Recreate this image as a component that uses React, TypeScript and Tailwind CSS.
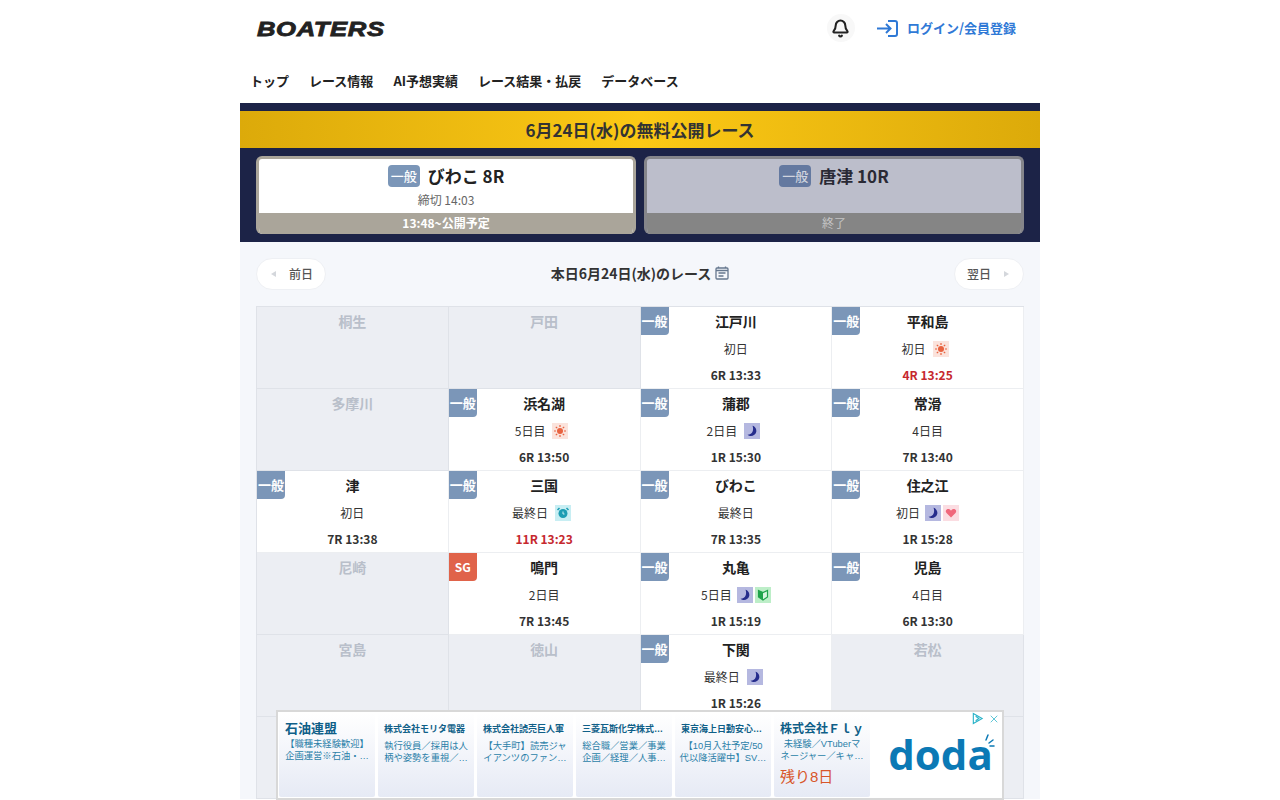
import { Bell, X } from 'lucide-react';

// ============================================
// Types / data
// ============================================

type Mark = 'sun' | 'moon' | 'alarm' | 'heart' | 'leaf';

interface Venue {
  name: string;
  grade?: string;
  day?: string;
  marks?: Mark[];
  race?: string;
  urgent?: boolean;
}

const venues: Venue[] = [
  { name: '桐生' },
  { name: '戸田' },
  { name: '江戸川', grade: '一般', day: '初日', race: '6R 13:33' },
  { name: '平和島', grade: '一般', day: '初日', marks: ['sun'], race: '4R 13:25', urgent: true },
  { name: '多摩川' },
  { name: '浜名湖', grade: '一般', day: '5日目', marks: ['sun'], race: '6R 13:50' },
  { name: '蒲郡', grade: '一般', day: '2日目', marks: ['moon'], race: '1R 15:30' },
  { name: '常滑', grade: '一般', day: '4日目', race: '7R 13:40' },
  { name: '津', grade: '一般', day: '初日', race: '7R 13:38' },
  { name: '三国', grade: '一般', day: '最終日', marks: ['alarm'], race: '11R 13:23', urgent: true },
  { name: 'びわこ', grade: '一般', day: '最終日', race: '7R 13:35' },
  { name: '住之江', grade: '一般', day: '初日', marks: ['moon', 'heart'], race: '1R 15:28' },
  { name: '尼崎' },
  { name: '鳴門', grade: 'SG', day: '2日目', race: '7R 13:45' },
  { name: '丸亀', grade: '一般', day: '5日目', marks: ['moon', 'leaf'], race: '1R 15:19' },
  { name: '児島', grade: '一般', day: '4日目', race: '6R 13:30' },
  { name: '宮島' },
  { name: '徳山' },
  { name: '下関', grade: '一般', day: '最終日', marks: ['moon'], race: '1R 15:26' },
  { name: '若松' },
  // last row sits behind the ad
  { name: '' },
  { name: '' },
  { name: '' },
  { name: '' },
];

const navItems = ['トップ', 'レース情報', 'AI予想実績', 'レース結果・払戻', 'データベース'];

const ads = [
  { title: '石油連盟', titleClass: 'text-[13px] leading-4', bodyClass: 'mt-[2px]', lines: ['【職種未経験歓迎】', '企画運営※石油・…'] },
  { title: '株式会社モリタ電器', titleClass: 'mt-[2px] text-[9px] leading-[12px]', bodyClass: 'mt-[6px]', lines: ['執行役員／採用は人', '柄や姿勢を重視／…'] },
  { title: '株式会社読売巨人軍', titleClass: 'mt-[2px] text-[9px] leading-[12px]', bodyClass: 'mt-[6px]', lines: ['【大手町】読売ジャ', 'イアンツのファン…'] },
  { title: '三菱瓦斯化学株式…', titleClass: 'mt-[2px] text-[9px] leading-[12px]', bodyClass: 'mt-[6px]', lines: ['総合職／営業／事業', '企画／経理／人事…'] },
  { title: '東京海上日動安心…', titleClass: 'mt-[2px] text-[9px] leading-[12px]', bodyClass: 'mt-[6px]', lines: ['【10月入社予定/50', '代以降活躍中】SV…'] },
  { title: '株式会社Ｆｌｙ', titleClass: 'text-[12px] leading-4', bodyClass: 'mt-[2px]', lines: ['未経験／VTuberマ', 'ネージャー／キャ…'], note: '残り8日' },
];

// ============================================
// Small parts
// ============================================

function MarkIcon({ type }: { type: Mark }) {
  if (type === 'sun') {
    return (
      <span className="flex h-4 w-4 items-center justify-center bg-[#fbe3dc]">
        <svg viewBox="0 0 16 16" className="h-4 w-4">
          <circle cx="8" cy="8" r="3" fill="#e8623f" />
          <path d="M8 2v2M8 12v2M2 8h2M12 8h2M3.8 3.8l1.4 1.4M10.8 10.8l1.4 1.4M3.8 12.2l1.4-1.4M10.8 5.2l1.4-1.4" stroke="#e8623f" strokeWidth="1.2" />
        </svg>
      </span>
    );
  }
  if (type === 'moon') {
    return (
      <span className="flex h-4 w-4 items-center justify-center bg-[#b5b8e0]">
        <svg viewBox="0 0 16 16" className="h-4 w-4">
          <path d="M8.500 2.800C11 3.500 12.800 6 12.300 8.800 11.800 11.500 8.800 13.500 6 13 5 12.800 4 12.300 3.500 11.800 6 11.800 8 10.500 8.800 8 9.300 6.300 9.200 4.300 8.500 2.800z" fill="#252c8c" />
        </svg>
      </span>
    );
  }
  if (type === 'alarm') {
    return (
      <span className="flex h-4 w-4 items-center justify-center bg-[#c8eef3]">
        <svg viewBox="0 0 16 16" className="h-4 w-4">
          <circle cx="8" cy="8.500" r="4.500" fill="#1d9db3" />
          <path d="M2.500 5l2-2M13.500 5l-2-2" stroke="#1d9db3" strokeWidth="1.500" />
          <path d="M8 6.500v2.500h1.500" stroke="#c8eef3" strokeWidth="1" fill="none" />
        </svg>
      </span>
    );
  }
  if (type === 'heart') {
    return (
      <span className="flex h-4 w-4 items-center justify-center bg-[#fbdde2]">
        <svg viewBox="0 0 16 16" className="h-4 w-4">
          <path d="M8 12.500 3.500 8C2 6.300 3.200 4 5.200 4c1.200 0 2.200.7 2.800 1.700C8.600 4.700 9.600 4 10.800 4c2 0 3.200 2.300 1.700 4z" fill="#f0687c" />
        </svg>
      </span>
    );
  }
  return (
    <span className="flex h-4 w-4 items-center justify-center bg-[#bdeec8]">
      <svg viewBox="0 0 16 16" className="h-4 w-4">
        <path d="M3.500 3.500 8 5.500l4.500-2v6.500L8 13 3.500 10z" fill="#d8f5df" stroke="#1fa34a" strokeWidth="1.200" />
        <path d="M3.500 3.500 8 5.500V13L3.500 10z" fill="#1fa34a" />
      </svg>
    </span>
  );
}

function VenueCell({ venue }: { venue: Venue }) {
  if (!venue.grade) {
    return (
      <div className="h-[82px] border-r border-b border-[#dfe2e8] bg-[#eceef3] pt-[4px] text-center text-[14px] leading-5 font-bold text-[#b9bfca]">
        {venue.name}
      </div>
    );
  }
  return (
    <div className="relative flex h-[82px] flex-col items-center border-r border-b border-[#eceef1] bg-white pt-[4px]">
      <span
        className={
          venue.grade === 'SG'
            ? 'absolute top-0 left-0 flex h-7 w-7 items-center justify-center rounded-br-[4px] bg-[#e0634a] text-[12px] font-bold text-white'
            : 'absolute top-0 left-0 flex h-7 w-7 items-center justify-center rounded-br-[4px] bg-[#7b96b8] text-[13px] font-bold text-white'
        }
      >
        {venue.grade}
      </span>
      <div className="text-[14px] leading-5 font-bold text-[#222]">{venue.name}</div>
      <div className={venue.marks?.length === 1 ? 'mt-[10px] flex h-4 items-center gap-[2px] pr-[5px] text-[12px] text-[#333]' : 'mt-[10px] flex h-4 items-center gap-[2px] text-[12px] text-[#333]'}>
        <span className={venue.marks?.length === 1 ? 'mr-[5px]' : venue.marks ? 'mr-[3px]' : ''}>{venue.day}</span>
        {venue.marks?.map((m) => <MarkIcon key={m} type={m} />)}
      </div>
      <div className={venue.urgent ? 'mt-[10px] text-[12px] leading-4 font-bold text-[#c6282e]' : 'mt-[10px] text-[12px] leading-4 font-bold text-[#333]'}>
        {venue.race}
      </div>
    </div>
  );
}

function AdBar() {
  return (
    <div className="fixed bottom-0 left-[276px] flex h-[90px] w-[728px] items-center gap-[3px] border-2 border-[#d8d8d8] bg-white pl-[1px] font-['Liberation_Sans','Noto_Sans_CJK_JP',sans-serif]">
      {ads.map((ad) => (
        <div key={ad.title} className="flex h-[84px] w-[96px] flex-col rounded-[2px] bg-gradient-to-b from-white to-[#e6eaf5] px-[6px] pt-[8px]">
          <div className={`${ad.titleClass} whitespace-nowrap font-bold text-[#0f5f88]`}>{ad.title}</div>
          <div className={`${ad.bodyClass} flex flex-col items-center text-[9.300px] leading-[11.500px] text-[#2a7fa8]`}>
            {ad.lines.map((l) => (
              <div key={l} className="whitespace-nowrap">{l}</div>
            ))}
          </div>
          {ad.note && <div className="mt-[5px] text-[15px] leading-5 text-[#d8562a]">{ad.note}</div>}
        </div>
      ))}
      <div className="flex flex-1 items-center justify-center pb-[2px] pl-[6px]">
        <span className="font-['Open_Sans',sans-serif] text-[42px] leading-none font-bold text-[#0b79b5]">doda</span>
      </div>
      <svg viewBox="0 0 12 16" className="absolute top-[22px] right-[7px] h-4 w-3">
        <path d="M3 6 5 1M6 9l4-3M7 12h4" stroke="#0b79b5" strokeWidth="1.500" strokeLinecap="round" />
      </svg>
      <div className="absolute top-0 right-[2px] flex items-center gap-[4px] text-[#2ab3c9]">
        <svg viewBox="0 0 14 14" className="h-[13px] w-[13px]">
          <path d="M2.500 1.500 12 7l-9.500 5.500zM5 4.500 8.500 7 5 9.500" fill="none" stroke="#2ab3c9" strokeWidth="1.200" />
        </svg>
        <X className="h-[12px] w-[12px]" strokeWidth={1.500} />
      </div>
    </div>
  );
}

// ============================================
// Main Component
// ============================================

export default function App() {
  return (
    <div className="h-screen overflow-hidden bg-white font-['Noto_Sans_CJK_JP','Noto_Sans',sans-serif] text-[#222]">
      <div className="mx-auto w-[800px]">
        {/* Header */}
        <header className="flex h-[56px] items-center justify-between pr-[24px] pl-[17px]">
          <div className="origin-left scale-x-[1.22] font-['Liberation_Sans',sans-serif] text-[21px] leading-none font-bold tracking-[0.5px] text-[#222] italic [-webkit-text-stroke:0.8px_#222]">
            BOATERS
          </div>
          <div className="flex items-center">
            <span className="flex h-7 w-7 items-center justify-center rounded-full bg-[#f8f8f8]">
              <Bell className="h-[19px] w-[19px] text-[#222]" strokeWidth={2.600} />
            </span>
            <span className="ml-[22px] flex items-center text-[#2f79d6]">
              <svg viewBox="0 0 21 17" className="h-[17px] w-[21px]" fill="none" stroke="#2f79d6" strokeWidth="2">
                <path d="M0 8.500h13M9 4l4.500 4.500L9 13" />
                <path d="M11 1h7a2 2 0 0 1 2 2v11a2 2 0 0 1-2 2h-7" />
              </svg>
              <span className="ml-[9px] text-[13px] font-bold">ログイン/会員登録</span>
            </span>
          </div>
        </header>

        {/* Nav */}
        <nav className="flex h-[47px] items-center gap-[20px] pt-[3px] pl-[10px] text-[13px] font-bold text-[#222]">
          {navItems.map((item) => (
            <span key={item}>{item}</span>
          ))}
        </nav>

        {/* Free races */}
        <section className="bg-[#1c2347] pt-2 pb-2">
          <h2 className="h-[37px] bg-gradient-to-r from-[#dcaa0a] via-[#fcc915] to-[#dcaa0a] text-center text-[17px] leading-[37px] font-bold text-[#333]">
            6月24日(水)の無料公開レース
          </h2>
          <div className="mt-2 flex gap-2 px-4">
            <div className="flex h-[78px] flex-1 flex-col overflow-hidden rounded-[6px] border-x-[3px] border-t-[3px] border-[#aaa59a] bg-white">
              <div className="flex flex-1 flex-col items-center pt-[6px]">
                <div className="flex h-[22px] items-center gap-2">
                  <span className="flex h-[22px] w-8 items-center justify-center rounded-[4px] bg-[#7b96b8] text-[13px] font-medium text-white">一般</span>
                  <span className="text-[17px] font-bold">びわこ 8R</span>
                </div>
                <div className="mt-[5px] text-[12px] leading-4 text-[#666]">締切 14:03</div>
              </div>
              <div className="-mx-[3px] h-[21px] bg-[#aaa59a] text-center text-[12px] leading-[19px] font-bold text-white">13:48~公開予定</div>
            </div>
            <div className="flex h-[78px] flex-1 flex-col overflow-hidden rounded-[6px] border-x-[3px] border-t-[3px] border-[#85858a] bg-[#bcbecb]">
              <div className="flex flex-1 flex-col items-center pt-[6px]">
                <div className="flex h-[22px] items-center gap-2">
                  <span className="flex h-[22px] w-8 items-center justify-center rounded-[4px] bg-[#6479a0] text-[13px] font-medium text-[#d0d4de]">一般</span>
                  <span className="text-[17px] font-bold text-[#2a2a35]">唐津 10R</span>
                </div>
              </div>
              <div className="-mx-[3px] h-[21px] bg-[#858585] text-center text-[12px] leading-[19px] text-[#c4c4c4]">終了</div>
            </div>
          </div>
        </section>

        {/* Race list */}
        <section className="bg-[#f5f7fb] px-4 pt-4">
          <div className="flex h-8 items-center justify-between">
            <span className="flex h-8 w-[70px] items-center justify-end gap-[13px] rounded-full border border-[#eef0f4] bg-white pr-[12px] text-[12px] font-medium text-[#555]">
              <span className="h-0 w-0 border-y-[3px] border-r-[5px] border-y-transparent border-r-[#d4d7dc]" />
              前日
            </span>
            <span className="flex -translate-y-px items-center gap-[3px] pl-[1px] text-[14px] font-bold text-[#333]">
              本日6月24日(水)のレース
              <svg viewBox="0 0 16 16" className="h-4 w-4" fill="none" stroke="#66788f" strokeWidth="1.300">
                <rect x="2" y="3" width="12" height="11" rx="1" />
                <path d="M4.500 1.500V3M11.500 1.500V3M2 5.500h12M4.500 8h7M4.500 11h5" />
              </svg>
            </span>
            <span className="flex h-8 w-[70px] items-center gap-[13px] rounded-full border border-[#eef0f4] bg-white pl-[12px] text-[12px] font-medium text-[#555]">
              翌日
              <span className="h-0 w-0 border-y-[3px] border-l-[5px] border-y-transparent border-l-[#d4d7dc]" />
            </span>
          </div>

          <div className="mt-4 grid grid-cols-4 border-t border-l border-[#dfe2e8]">
            {venues.map((v, i) => (
              <VenueCell key={i} venue={v} />
            ))}
          </div>
        </section>
      </div>

      <AdBar />
    </div>
  );
}
